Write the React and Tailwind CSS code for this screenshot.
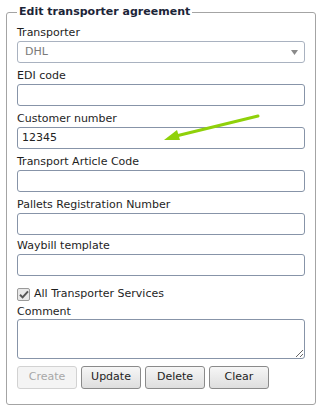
import React from "react";

const font = { fontFamily: "'DejaVu Sans', Verdana, sans-serif" };

function Field({ label, value, className = "" }) {
  return (
    <div className={"flex flex-col " + className}>
      <label className="block text-[11px] leading-[16px] text-[#1e1e1e]">{label}</label>
      <div className="h-[22px] w-full rounded-[3px] border border-[#8794a8] bg-white px-[4px] text-[11px] leading-[20px] text-[#222]">
        {value}
      </div>
    </div>
  );
}

function Btn({ children, disabled }) {
  return (
    <div
      className={
        "flex h-[23px] w-[60px] items-center justify-center rounded-[3px] border text-[11px] " +
        (disabled
          ? "border-[#d2d2d2] bg-[#f4f4f4] text-[#a8a8a8]"
          : "border-[#8a8a8a] bg-gradient-to-b from-[#f6f6f6] to-[#dedede] text-[#1e1e1e]")
      }
    >
      {children}
    </div>
  );
}

export default function App() {
  return (
    <div className="relative h-[410px] w-[321px] bg-white" style={font}>
      <div className="px-[6px] pt-[4px]">
        <fieldset className="w-[310px] rounded-[3px] border border-[#a4a4a4] pb-[15px] pl-[10px] pr-[10px]">
          <legend className="px-[2px] text-[11px] font-bold leading-[16px] text-[#1c2538]">
            Edit transporter agreement
          </legend>
          <div className="mt-[5px] flex flex-col">
            <div className="flex flex-col">
              <label className="block text-[11px] leading-[16px] text-[#1e1e1e]">Transporter</label>
              <div className="flex h-[22px] w-full items-center justify-between rounded-[3px] border border-[#a9b2c0] bg-white pl-[7px] pr-[6px] text-[11px] text-[#7a7a7a]">
                <span>DHL</span>
                <svg width="7" height="5" viewBox="0 0 7 5">
                  <path d="M0 0 H7 L3.5 5 Z" fill="#8a8a8a" />
                </svg>
              </div>
            </div>
            <Field label="EDI code" className="mt-[5px]" />
            <Field label="Customer number" value="12345" className="mt-[5px]" />
            <Field label="Transport Article Code" className="mt-[5px]" />
            <Field label="Pallets Registration Number" className="mt-[5px]" />
            <Field label="Waybill template" className="mt-[3px]" />
            <div className="mt-[11px] flex items-center gap-[4px]">
              <div className="flex h-[13px] w-[13px] items-center justify-center rounded-[2px] border border-[#9a9a9a] bg-[#e8e8e8]">
                <svg width="10" height="9" viewBox="0 0 10 9">
                  <path d="M1 4.8 L3.6 7.4 L9 1.4" fill="none" stroke="#555" strokeWidth="2" />
                </svg>
              </div>
              <span className="text-[11px] leading-[14px] text-[#1e1e1e]">All Transporter Services</span>
            </div>
            <div className="mt-[4px] flex flex-col">
              <label className="block text-[11px] leading-[14px] text-[#1e1e1e]">Comment</label>
              <textarea
                className="block h-[40px] w-full resize-y rounded-[3px] border border-[#8794a8] bg-white"
                readOnly
              />
            </div>
            <div className="mt-[7px] flex gap-[4px]">
              <Btn disabled>Create</Btn>
              <Btn>Update</Btn>
              <Btn>Delete</Btn>
              <Btn>Clear</Btn>
            </div>
          </div>
        </fieldset>
      </div>
      <svg className="pointer-events-none absolute left-0 top-0" width="321" height="410">
        <line x1="258" y1="116" x2="176" y2="136" stroke="#8fd10a" strokeWidth="3" strokeLinecap="round" />
        <path d="M164 140 L177 130 L180 140 Z" fill="#8fd10a" />
      </svg>
    </div>
  );
}
